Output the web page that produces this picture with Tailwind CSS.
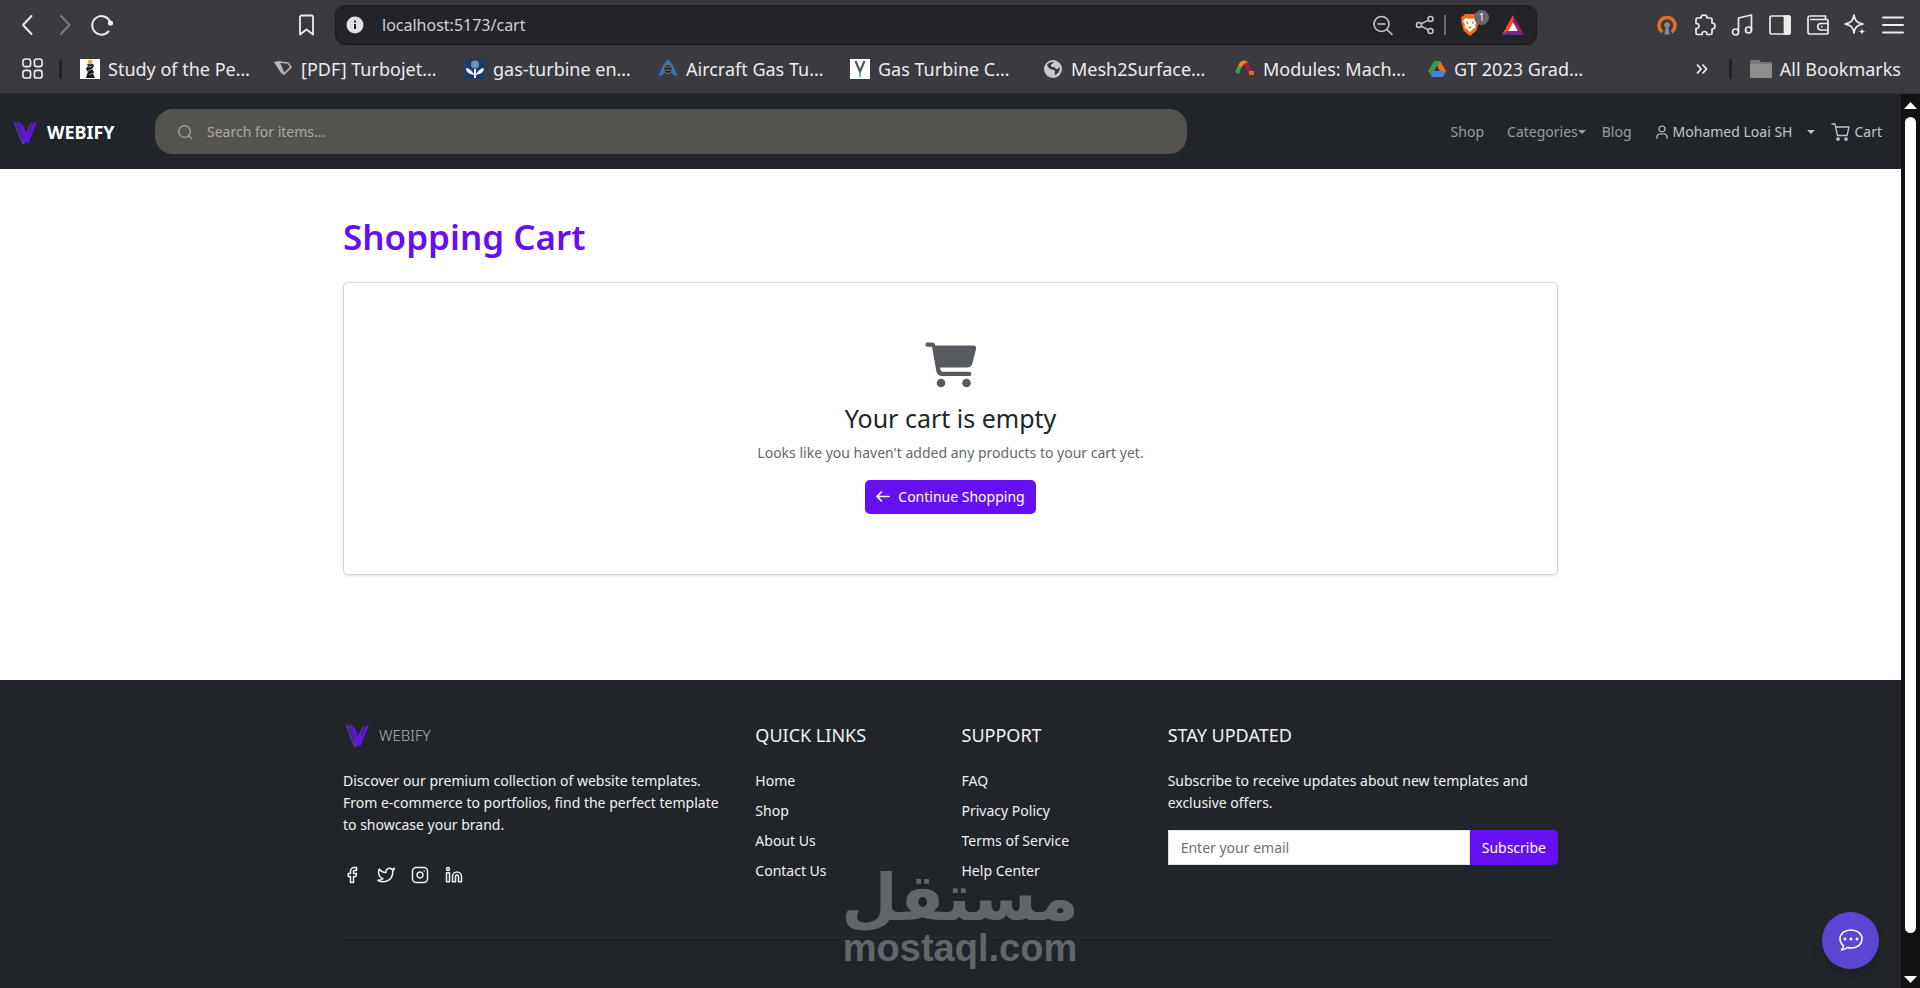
<!DOCTYPE html>
<html lang="en">
<head>
    <meta charset="UTF-8">
    <meta name="viewport" content="width=device-width, initial-scale=1.0">
    <title>Webify - Shopping Cart</title>
    <script src="https://cdn.jsdelivr.net/npm/@tailwindcss/browser@4"></script>
</head>
<body class="relative h-screen overflow-hidden flex flex-col bg-white font-['Noto_Sans',sans-serif]">

    <!-- Shared symbols -->
    <svg class="hidden">
        <symbol id="logo" viewBox="0 0 24 24">
            <path d="M0 1l4.500 2.500L11 18l6-14 2.500-2L11.500 24H9L3 9z" fill="#5b2bb5" />
            <path d="M4 1l3 1.500L12.500 15l-1.500 3z" fill="#5426a8" />
            <path d="M6.500 3L10 5l4.500 11L20 4l4-3-3 8-5.500 14H13z" fill="#6610f2" />
            <path d="M3.500 5l6 14" stroke="#212529" stroke-width=".8" />
        </symbol>
    </svg>

    <!-- Browser Chrome -->
    <header class="h-[94px] shrink-0 bg-[#3b3a3f] border-b border-[#2f2e34] text-[#ececef]">
        <div class="h-[50px] flex items-center pl-4 pr-4">
            <!-- Navigation Buttons -->
            <div class="w-[319px] shrink-0 flex items-center">
                <button type="button" aria-label="Back" class="w-6">
                    <svg class="size-6" viewBox="0 0 24 24" fill="none" stroke="currentColor" stroke-width="2" stroke-linecap="round" stroke-linejoin="round"><path d="M15.500 3L7 12l8.500 9" /></svg>
                </button>
                <button type="button" aria-label="Forward" class="w-6 ml-3 text-[#7d7c81]">
                    <svg class="size-6" viewBox="0 0 24 24" fill="none" stroke="currentColor" stroke-width="2" stroke-linecap="round" stroke-linejoin="round"><path d="M9 3l8.500 9L9 21" /></svg>
                </button>
                <button type="button" aria-label="Reload" class="w-6 ml-[14px]">
                    <svg class="size-6" viewBox="0 0 24 24" fill="none" stroke="currentColor" stroke-width="2" stroke-linecap="round"><path d="M18.500 18.500A9.300 9.300 0 1 1 20 8.500" /><circle cx="20.500" cy="10" r="2.600" fill="currentColor" stroke="none" /></svg>
                </button>
                <button type="button" aria-label="Bookmark this page" class="ml-auto mr-4">
                    <svg class="size-6" viewBox="0 0 24 24" fill="none" stroke="currentColor" stroke-width="1.800" stroke-linejoin="round"><path d="M6 2.500h10.500a1.500 1.500 0 0 1 1.500 1.500v17.500l-6.500-5-6.500 5V4a1.500 1.500 0 0 1 1-1.500z" /></svg>
                </button>
            </div>

            <!-- Address Bar -->
            <div class="w-[1202px] h-10 flex items-center rounded-[10px] border border-[#1b1a1f] bg-[#242328] pl-[10px] pr-3">
                <svg class="size-[18px] shrink-0" viewBox="0 0 18 18"><circle cx="9" cy="9" r="8.500" fill="#dfe1e5" /><path d="M9 8v5M9 4.500v2" stroke="#242328" stroke-width="2" /></svg>
                <input type="text" aria-label="Address" value="localhost:5173/cart" class="flex-1 min-w-0 ml-[18px] bg-transparent text-base text-[#d0d0d6] outline-none">
                <svg class="size-[22px] text-[#c8c8cd]" viewBox="0 0 22 22" fill="none" stroke="currentColor" stroke-width="1.600" stroke-linecap="round"><circle cx="9.500" cy="10" r="7.500" /><path d="M15 15.500l5 5M6 10h7" /></svg>
                <svg class="size-5 ml-[21px] text-[#c8c8cd]" viewBox="0 0 20 20" fill="none" stroke="currentColor" stroke-width="1.500"><circle cx="4" cy="10" r="2.500" /><circle cx="15.500" cy="4" r="2.500" /><circle cx="15.500" cy="16" r="2.500" /><path d="M6.200 8.800l7-3.700M6.200 11.200l7 3.700" /></svg>
                <span class="w-[2px] h-5 ml-[9px] bg-[#6c6b71]"></span>
                <span class="relative ml-[14px]">
                    <svg class="w-5 h-6" viewBox="0 0 20 24"><path d="M5 1h10l2 2 2 1-.5 3 .5 1-2.500 9.500L10 23l-6.500-5.500L1 8l.5-1L1 4l2-1z" fill="#fb6a1c" /><path d="M5.500 5l2.500.700h4l2.500-.700 2.500 3-2 4 .5 2.500-3 2L10 19l-2.500-2.500-3-2 .5-2.500-2-4z" fill="#fff" /><path d="M5.500 8.500l3 .800-1 2.200zM14.500 8.500l-3 .800 1 2.200zM8 14l2 1.500L12 14l-2-.7z" fill="#fb6a1c" /></svg>
                    <span class="absolute -top-[3px] left-[14px] size-[15px] rounded-full bg-[#66656b] text-white text-[10px] leading-[15px] text-center">1</span>
                </span>
                <svg class="w-[22px] h-5 ml-[22px]" viewBox="0 0 22 20"><path d="M11 0L0 20l6-4 5-8z" fill="#ff4724" /><path d="M11 0l11 20-6-4-5-8z" fill="#9e1f63" /><path d="M0 20h22l-6-4H6z" fill="#662d91" /><path d="M11 7.500L6 16h10z" fill="#fff" /></svg>
            </div>

            <!-- Extensions -->
            <div class="w-[248px] ml-auto flex items-center justify-between">
                <svg class="size-[22px]" viewBox="0 0 22 22"><path d="M6.500 18A8 8 0 1 1 15.500 18" fill="none" stroke="#ea6c1f" stroke-width="3.500" /><circle cx="11" cy="11" r="2.800" fill="#8b8a90" /><path d="M9.800 12h2.400l1.300 8.500h-5z" fill="#8b8a90" /></svg>
                <svg class="size-[22px]" viewBox="0 0 22 22" fill="none" stroke="currentColor" stroke-width="1.700" stroke-linejoin="round"><path d="M3.500 4H7c-.5-4 6.500-4 6 0h3.500a1.500 1.500 0 0 1 1.500 1.500V9c4 0 4 6 0 6v4a1.500 1.500 0 0 1-1.500 1.500H13c.5-4-5.500-4-5 0H3.500A1.500 1.500 0 0 1 2 19v-4.500c4 .5 4-5.500 0-5V5.500A1.500 1.500 0 0 1 3.500 4z" /></svg>
                <svg class="size-[22px]" viewBox="0 0 22 22" fill="none" stroke="currentColor" stroke-width="1.700" stroke-linejoin="round"><path d="M7.500 18V4l13-3v15" /><circle cx="4.500" cy="18" r="3" /><circle cx="17.500" cy="16" r="3" /></svg>
                <svg class="size-[22px]" viewBox="0 0 22 22" fill="none" stroke="currentColor" stroke-width="1.700"><rect x="1" y="2" width="20" height="18" rx="1.500" /><path d="M15.500 2H20a1 1 0 0 1 1 1v16a1 1 0 0 1-1 1h-4.500z" fill="currentColor" /></svg>
                <svg class="size-[22px]" viewBox="0 0 22 22" fill="none" stroke="currentColor" stroke-width="1.700" stroke-linejoin="round"><path d="M18.500 5.500V2H3a2 2 0 0 0-2 2v14a2 2 0 0 0 2 2h17a1 1 0 0 0 1-1V6.500a1 1 0 0 0-1-1H3M21 9.500h-7a3 3 0 0 0 0 6.500h7M14 12.700h1.500" /></svg>
                <svg class="size-[22px]" viewBox="0 0 22 22" fill="none" stroke="currentColor" stroke-width="1.700" stroke-linejoin="round"><path d="M10 1c1 6 2.500 7.500 9 9-6.500 1.500-8 3-9 9-1-6-2.500-7.500-9-9 6.500-1.500 8-3 9-9z" /><path d="M18 13.500c.5 3 1 3.500 4 4-3 .5-3.500 1-4 4-.5-3-1-3.500-4-4 3-.5 3.500-1 4-4z" fill="currentColor" stroke="#3b3a3f" stroke-width=".4" /></svg>
                <svg class="size-[22px]" viewBox="0 0 22 22" stroke="currentColor" stroke-width="2" stroke-linecap="round"><path d="M1 3.500h20M1 11h20M1 18.500h20" /></svg>
            </div>
        </div>

        <!-- Bookmarks Bar -->
        <nav aria-label="Bookmarks" class="h-[37px] flex items-center pl-[22px] pr-[19px] text-lg">
            <svg class="size-[21px] shrink-0" viewBox="0 0 22 22" fill="none" stroke="currentColor" stroke-width="1.700"><rect x="1" y="1" width="8" height="8" rx="2.500" /><rect x="13" y="1" width="8" height="8" rx="2.500" /><rect x="1" y="13" width="8" height="8" rx="2.500" /><rect x="13" y="13" width="8" height="8" rx="2.500" /></svg>
            <span class="w-[3px] h-5 ml-4 mr-[18px] shrink-0 rounded bg-[#232227]"></span>
            <a href="#" class="w-[193px] shrink-0 flex items-center gap-2">
                <svg class="size-5 shrink-0" viewBox="0 0 20 20"><path fill="#fff" d="M0 0h20v20H0z" /><path d="M7 5h6l1 2-2 3 2 3-1 2 2 4H6l1-4 1-2-2-3 2-3z" fill="#161616" /><circle cx="10" cy="3" r="2.500" fill="#e0ad6b" /><path d="M8 12l4-2M9 16l4-2M8 8l4-1" stroke="#999" /></svg>
                <span class="whitespace-nowrap">Study of the Pe…</span>
            </a>
            <a href="#" class="w-[192px] shrink-0 flex items-center gap-2">
                <svg class="size-5 shrink-0" viewBox="0 0 20 20"><path d="M1 3l5-1 4 13-2-1z" fill="#b9b9bb" /><path d="M6 3l9 1 3 4-7 7z" fill="none" stroke="#b9b9bb" stroke-width="1.600" /><path d="M14 3l5 5" stroke="#88878b" /></svg>
                <span class="whitespace-nowrap">[PDF] Turbojet…</span>
            </a>
            <a href="#" class="w-[193px] shrink-0 flex items-center gap-2">
                <svg class="size-5 shrink-0" viewBox="0 0 20 20"><path fill="#1b3a6d" d="M0 0h20v20H0z" /><circle cx="10" cy="5.500" r="4" fill="#6f93bd" /><path d="M1 9c3 0 6 3 8 6V10h2v5c2-3 5-6 8-6 0 4-3 6-8 7v3H9v-3c-5-1-8-3-8-7z" fill="#eef3f9" /></svg>
                <span class="whitespace-nowrap">gas-turbine en…</span>
            </a>
            <a href="#" class="w-[192px] shrink-0 flex items-center gap-2">
                <svg class="size-5 shrink-0" viewBox="0 0 20 20"><path d="M10 0l4 5 6 12-5-1-5-8-5 8-5 1L6 5z" fill="#3970bd" /><circle cx="10" cy="10" r="4.500" fill="#26262b" stroke="#77777c" /><path d="M6 8h8M6 11h8" stroke="#77777c" /></svg>
                <span class="whitespace-nowrap">Aircraft Gas Tu…</span>
            </a>
            <a href="#" class="w-[193px] shrink-0 flex items-center gap-2">
                <svg class="size-5 shrink-0" viewBox="0 0 20 20"><path fill="#fff" d="M0 0h20v20H0z" /><path d="M5.500 2L10 12.500 14.500 2" fill="none" stroke="#555" stroke-width="2.200" /><path d="M10 14v4" stroke="#5ab4e8" stroke-width="2" /></svg>
                <span class="whitespace-nowrap">Gas Turbine C…</span>
            </a>
            <a href="#" class="w-[192px] shrink-0 flex items-center gap-2">
                <svg class="size-5 shrink-0" viewBox="0 0 20 20"><circle cx="10" cy="10" r="9" fill="#c9cacd" /><path d="M4 6c2-3 5-3 7-3-1 2-4 2-3 4s3 0 4 2 3 1 5-1c0 4-2 7-5 8-1-2 1-4-1-5s-5 0-7-5z" fill="#3b3a3f" /></svg>
                <span class="whitespace-nowrap">Mesh2Surface…</span>
            </a>
            <a href="#" class="w-[193px] shrink-0 flex items-center gap-2">
                <svg class="size-5 shrink-0" viewBox="0 0 20 20" fill="none" stroke-width="4"><path d="M2 14l2.500-6" stroke="#34a853" /><path d="M5 8c1-5 5-6 7-2" stroke="#f4801f" /><path d="M11 4l4 10" stroke="#b3124f" /><path d="M14 14h5" stroke="#f0642c" /></svg>
                <span class="whitespace-nowrap">Modules: Mach…</span>
            </a>
            <a href="#" class="shrink-0 flex items-center gap-2">
                <svg class="size-[18px] shrink-0" viewBox="0 0 18 18"><path d="M6 1h6L4 16l-4-5z" fill="#2f9e4f" /><path d="M12 1l6 10-3 5-6-9z" fill="#f2701d" /><path d="M5 11h13l-3 6H3z" fill="#3f83e8" /><path d="M9 6l3 5H6z" fill="#3b3a3f" /></svg>
                <span class="whitespace-nowrap">GT 2023 Grad…</span>
            </a>
            <svg class="ml-auto w-3 h-4 shrink-0" viewBox="0 0 12 16" fill="none" stroke="currentColor" stroke-width="1.800"><path d="M1 3.500L5 8l-4 4.500M6.500 3.500l4 4.500-4 4.500" /></svg>
            <span class="w-[3px] h-5 ml-[21px] mr-[18px] shrink-0 rounded bg-[#232227]"></span>
            <a href="#" class="shrink-0 flex items-center gap-2">
                <svg class="w-[22px] h-[18px]" viewBox="0 0 22 18"><path d="M1 0h8l2 2h10a1 1 0 0 1 1 1v14a1 1 0 0 1-1 1H1a1 1 0 0 1-1-1V1z" fill="#77787a" /><path d="M0 4h22v13a1 1 0 0 1-1 1H1a1 1 0 0 1-1-1z" fill="#8d8e90" /></svg>
                <span class="whitespace-nowrap">All Bookmarks</span>
            </a>
        </nav>
    </header>

    <div class="flex-1 min-h-0 flex">
        <div class="relative flex-1 min-w-0 flex flex-col text-sm">
            <!-- Navbar -->
            <nav class="h-[75px] shrink-0 flex items-center bg-[#212529] pl-[13px] pr-[19px] text-[#9b9da0]">
                <a href="#" class="w-[142px] shrink-0 flex items-center gap-[10px] text-lg leading-6 font-bold text-white">
                    <svg class="size-6"><use href="#logo" /></svg>
                    WEBIFY
                </a>
                <label class="w-[55.2%] h-[45px] flex items-center gap-[14px] rounded-[18px] bg-[#555350] pl-[22px] pr-4">
                    <svg class="size-4 shrink-0 text-[#a9a8a6]" viewBox="0 0 16 16" fill="none" stroke="currentColor" stroke-width="1.300" stroke-linecap="round"><circle cx="7.500" cy="7.500" r="5.800" /><path d="M12 12l2.500 2.500" /></svg>
                    <input type="search" aria-label="Search for items" placeholder="Search for items..." class="flex-1 min-w-0 bg-transparent outline-none placeholder:text-[#a9a8a6]">
                </label>
                <div class="ml-auto flex items-center whitespace-nowrap">
                    <a href="#">Shop</a>
                    <a href="#" class="ml-[23px] flex items-center">Categories
                        <svg class="w-2 h-1" viewBox="0 0 8 4"><path d="M0 0h8L4 4z" fill="currentColor" /></svg>
                    </a>
                    <a href="#" class="ml-4">Blog</a>
                    <a href="#" class="ml-6 flex items-center text-[#c3c4c6]">
                        <svg class="w-3 h-[14px] mr-[5px]" viewBox="0 0 12 14" fill="none" stroke="currentColor" stroke-width="1.200" stroke-linecap="round"><circle cx="6" cy="4" r="3" /><path d="M1 13.500v-1.500a3 3 0 0 1 3-3h4a3 3 0 0 1 3 3v1.500" /></svg>
                        Mohamed Loai SH
                        <svg class="w-2 h-1 ml-[15px]" viewBox="0 0 8 4"><path d="M0 0h8L4 4z" fill="currentColor" /></svg>
                    </a>
                    <a href="#" class="ml-4 flex items-center gap-1 text-[#c3c4c6]">
                        <svg class="w-[19px] h-[18px]" viewBox="0 0 19 18" fill="none" stroke="currentColor" stroke-width="1.300" stroke-linecap="round" stroke-linejoin="round"><path d="M1 1h3l2.500 11.500h9.500L18 4H5" /><circle cx="7" cy="16" r="1.200" fill="currentColor" /><circle cx="15" cy="16" r="1.200" fill="currentColor" /></svg>
                        Cart
                    </a>
                </div>
            </nav>

            <!-- Cart -->
            <main class="w-full max-w-[1215px] mx-auto pt-11 pb-[105px]">
                <h1 class="text-[35px] leading-[48px] font-semibold text-[#6610f2]">Shopping Cart</h1>
                <section class="mt-[21px] h-[293px] flex flex-col items-center rounded-[5px] border border-[#d3d4d5] shadow-sm pt-[57px]">
                    <svg class="w-[52px] h-[48px] text-[#575b5f]" viewBox="0 0 52 48" fill="currentColor"><path d="M2 2.500h5c2 0 3 1 3.300 3H48c2.500 0 3.500 1.500 3 3.500l-3.500 14c-.7 3-2.500 4.500-5.500 4.500H15.200l.3 2c.2 1.500 1 2.200 2.500 2.200h26.200a2.200 2.200 0 0 1 0 4.400H18c-4 0-6.200-2-6.800-5.600L7 6.800H2.300a2.200 2.200 0 0 1-.3-4.300z" /><circle cx="16" cy="43" r="4.300" /><circle cx="41.500" cy="43" r="4.300" /></svg>
                    <h2 class="mt-[14px] text-[25px] leading-8 text-[#212529]">Your cart is empty</h2>
                    <p class="mt-2 leading-[22px] text-[#64696d]">Looks like you haven't added any products to your cart yet.</p>
                    <button type="button" class="mt-4 h-[34px] flex items-center gap-2 rounded-[5px] bg-[#6610f2] px-[11px] text-white">
                        <svg class="w-[14px] h-3" viewBox="0 0 14 12" fill="none" stroke="currentColor" stroke-width="1.700" stroke-linecap="round" stroke-linejoin="round"><path d="M13 5.500H1.500M5.500 1L1 5.500 5.500 10" /></svg>
                        Continue Shopping
                    </button>
                </section>
            </main>

            <!-- Footer -->
            <footer class="flex-1 bg-[#212529] pt-[43px] text-[#f1f2f3]">
                <div class="w-full max-w-[1215px] mx-auto">
                    <div class="grid grid-cols-12 gap-x-[22px] h-[215px] border-b border-[#282c30] leading-[22px]">
                        <div class="col-span-4">
                            <a href="#" class="h-6 flex items-center gap-[10px] pl-[2px] text-[15px] font-light text-[#b4b5b7]">
                                <svg class="size-6"><use href="#logo" /></svg>
                                WEBIFY
                            </a>
                            <p class="mt-[23px]">Discover our premium collection of website templates. From e-commerce to portfolios, find the perfect template to showcase your brand.</p>
                            <div class="mt-[30px] flex items-center gap-4">
                                <a href="#" aria-label="Facebook"><svg class="size-[18px]" viewBox="0 0 24 24" fill="none" stroke="currentColor" stroke-width="2" stroke-linecap="round" stroke-linejoin="round"><path d="M18 2h-3a5 5 0 0 0-5 5v3H7v4h3v8h4v-8h3l1-4h-4V7a1 1 0 0 1 1-1h3z" /></svg></a>
                                <a href="#" aria-label="Twitter"><svg class="size-[18px]" viewBox="0 0 24 24" fill="none" stroke="currentColor" stroke-width="2" stroke-linecap="round" stroke-linejoin="round"><path d="M23 3a10.900 10.900 0 0 1-3.140 1.530 4.480 4.480 0 0 0-7.860 3v1A10.660 10.660 0 0 1 3 4s-4 9 5 13a11.640 11.640 0 0 1-7 2c9 5 20 0 20-11.500a4.500 4.500 0 0 0-.08-.83A7.720 7.720 0 0 0 23 3z" /></svg></a>
                                <a href="#" aria-label="Instagram"><svg class="size-[18px]" viewBox="0 0 24 24" fill="none" stroke="currentColor" stroke-width="2" stroke-linecap="round" stroke-linejoin="round"><rect x="2" y="2" width="20" height="20" rx="5" /><path d="M16 11.370A4 4 0 1 1 12.630 8 4 4 0 0 1 16 11.370zM17.500 6.500h.01" /></svg></a>
                                <a href="#" aria-label="LinkedIn"><svg class="size-[18px]" viewBox="0 0 24 24" fill="none" stroke="currentColor" stroke-width="2" stroke-linecap="round" stroke-linejoin="round"><path d="M16 8a6 6 0 0 1 6 6v7h-4v-7a2 2 0 0 0-4 0v7h-4v-7a6 6 0 0 1 6-6zM2 9h4v12H2z" /><circle cx="4" cy="4" r="2" /></svg></a>
                            </div>
                        </div>
                        <div class="col-span-2">
                            <h3 class="text-lg leading-6">QUICK LINKS</h3>
                            <ul class="mt-[23px] space-y-2">
                                <li><a href="#">Home</a></li>
                                <li><a href="#">Shop</a></li>
                                <li><a href="#">About Us</a></li>
                                <li><a href="#">Contact Us</a></li>
                            </ul>
                        </div>
                        <div class="col-span-2">
                            <h3 class="text-lg leading-6">SUPPORT</h3>
                            <ul class="mt-[23px] space-y-2">
                                <li><a href="#">FAQ</a></li>
                                <li><a href="#">Privacy Policy</a></li>
                                <li><a href="#">Terms of Service</a></li>
                                <li><a href="#">Help Center</a></li>
                            </ul>
                        </div>
                        <div class="col-span-4">
                            <h3 class="text-lg leading-6">STAY UPDATED</h3>
                            <p class="mt-[23px]">Subscribe to receive updates about new templates and exclusive offers.</p>
                            <form class="mt-4 flex h-[35px]">
                                <input type="email" aria-label="Email" placeholder="Enter your email" class="flex-1 min-w-0 bg-white border border-[#dee2e6] px-3 text-[#212529] outline-none placeholder:text-[#6c7175]">
                                <button type="submit" class="bg-[#6610f2] px-3 text-white rounded-r-[5px]">Subscribe</button>
                            </form>
                        </div>
                    </div>
                </div>
            </footer>

            <!-- Chat Button -->
            <button type="button" aria-label="Open chat" class="absolute right-[22px] bottom-[19px] size-[57px] flex items-center justify-center rounded-full bg-[#5d45d3] text-white shadow-lg">
                <svg class="size-6" viewBox="0 0 24 24" fill="none" stroke="currentColor" stroke-width="1.500" stroke-linejoin="round"><path d="M12 1c6 0 11 3.500 11 9s-5 9-11 9c-1.500 0-2.500-.2-3.500-.500-1.500 1-3.500 2.500-6 2.500 1-1.500 2-2.500 2-4C2.500 15 1 13 1 10c0-5.500 5-9 11-9z" /><path d="M6 10h.01M12 10h.01M18 10h.01" stroke-width="3" stroke-linecap="round" /></svg>
            </button>
        </div>

        <!-- Scrollbar -->
        <div class="w-[19px] shrink-0 flex flex-col items-center bg-[#111111] pt-2 pb-[5px]">
            <svg class="w-[13px] h-[7px]" viewBox="0 0 13 7"><path d="M0 7l6.500-7L13 7z" fill="#fff" /></svg>
            <span class="w-[11px] h-[816px] mt-2 rounded-full bg-white"></span>
            <svg class="w-[13px] h-[7px] mt-auto" viewBox="0 0 13 7"><path d="M0 0l6.500 7L13 0z" fill="#fff" /></svg>
        </div>
    </div>

    <!-- Watermark -->
    <div class="absolute bottom-5 left-1/2 -translate-x-1/2 flex flex-col items-center text-[#62666a] font-bold pointer-events-none">
        <span lang="ar" dir="rtl" class="font-['DejaVu_Sans',sans-serif] text-[65px] leading-[60px]">مستقل</span>
        <span class="font-['Liberation_Sans',sans-serif] text-[38px] leading-[40px]">mostaql.com</span>
    </div>
</body>
</html>
